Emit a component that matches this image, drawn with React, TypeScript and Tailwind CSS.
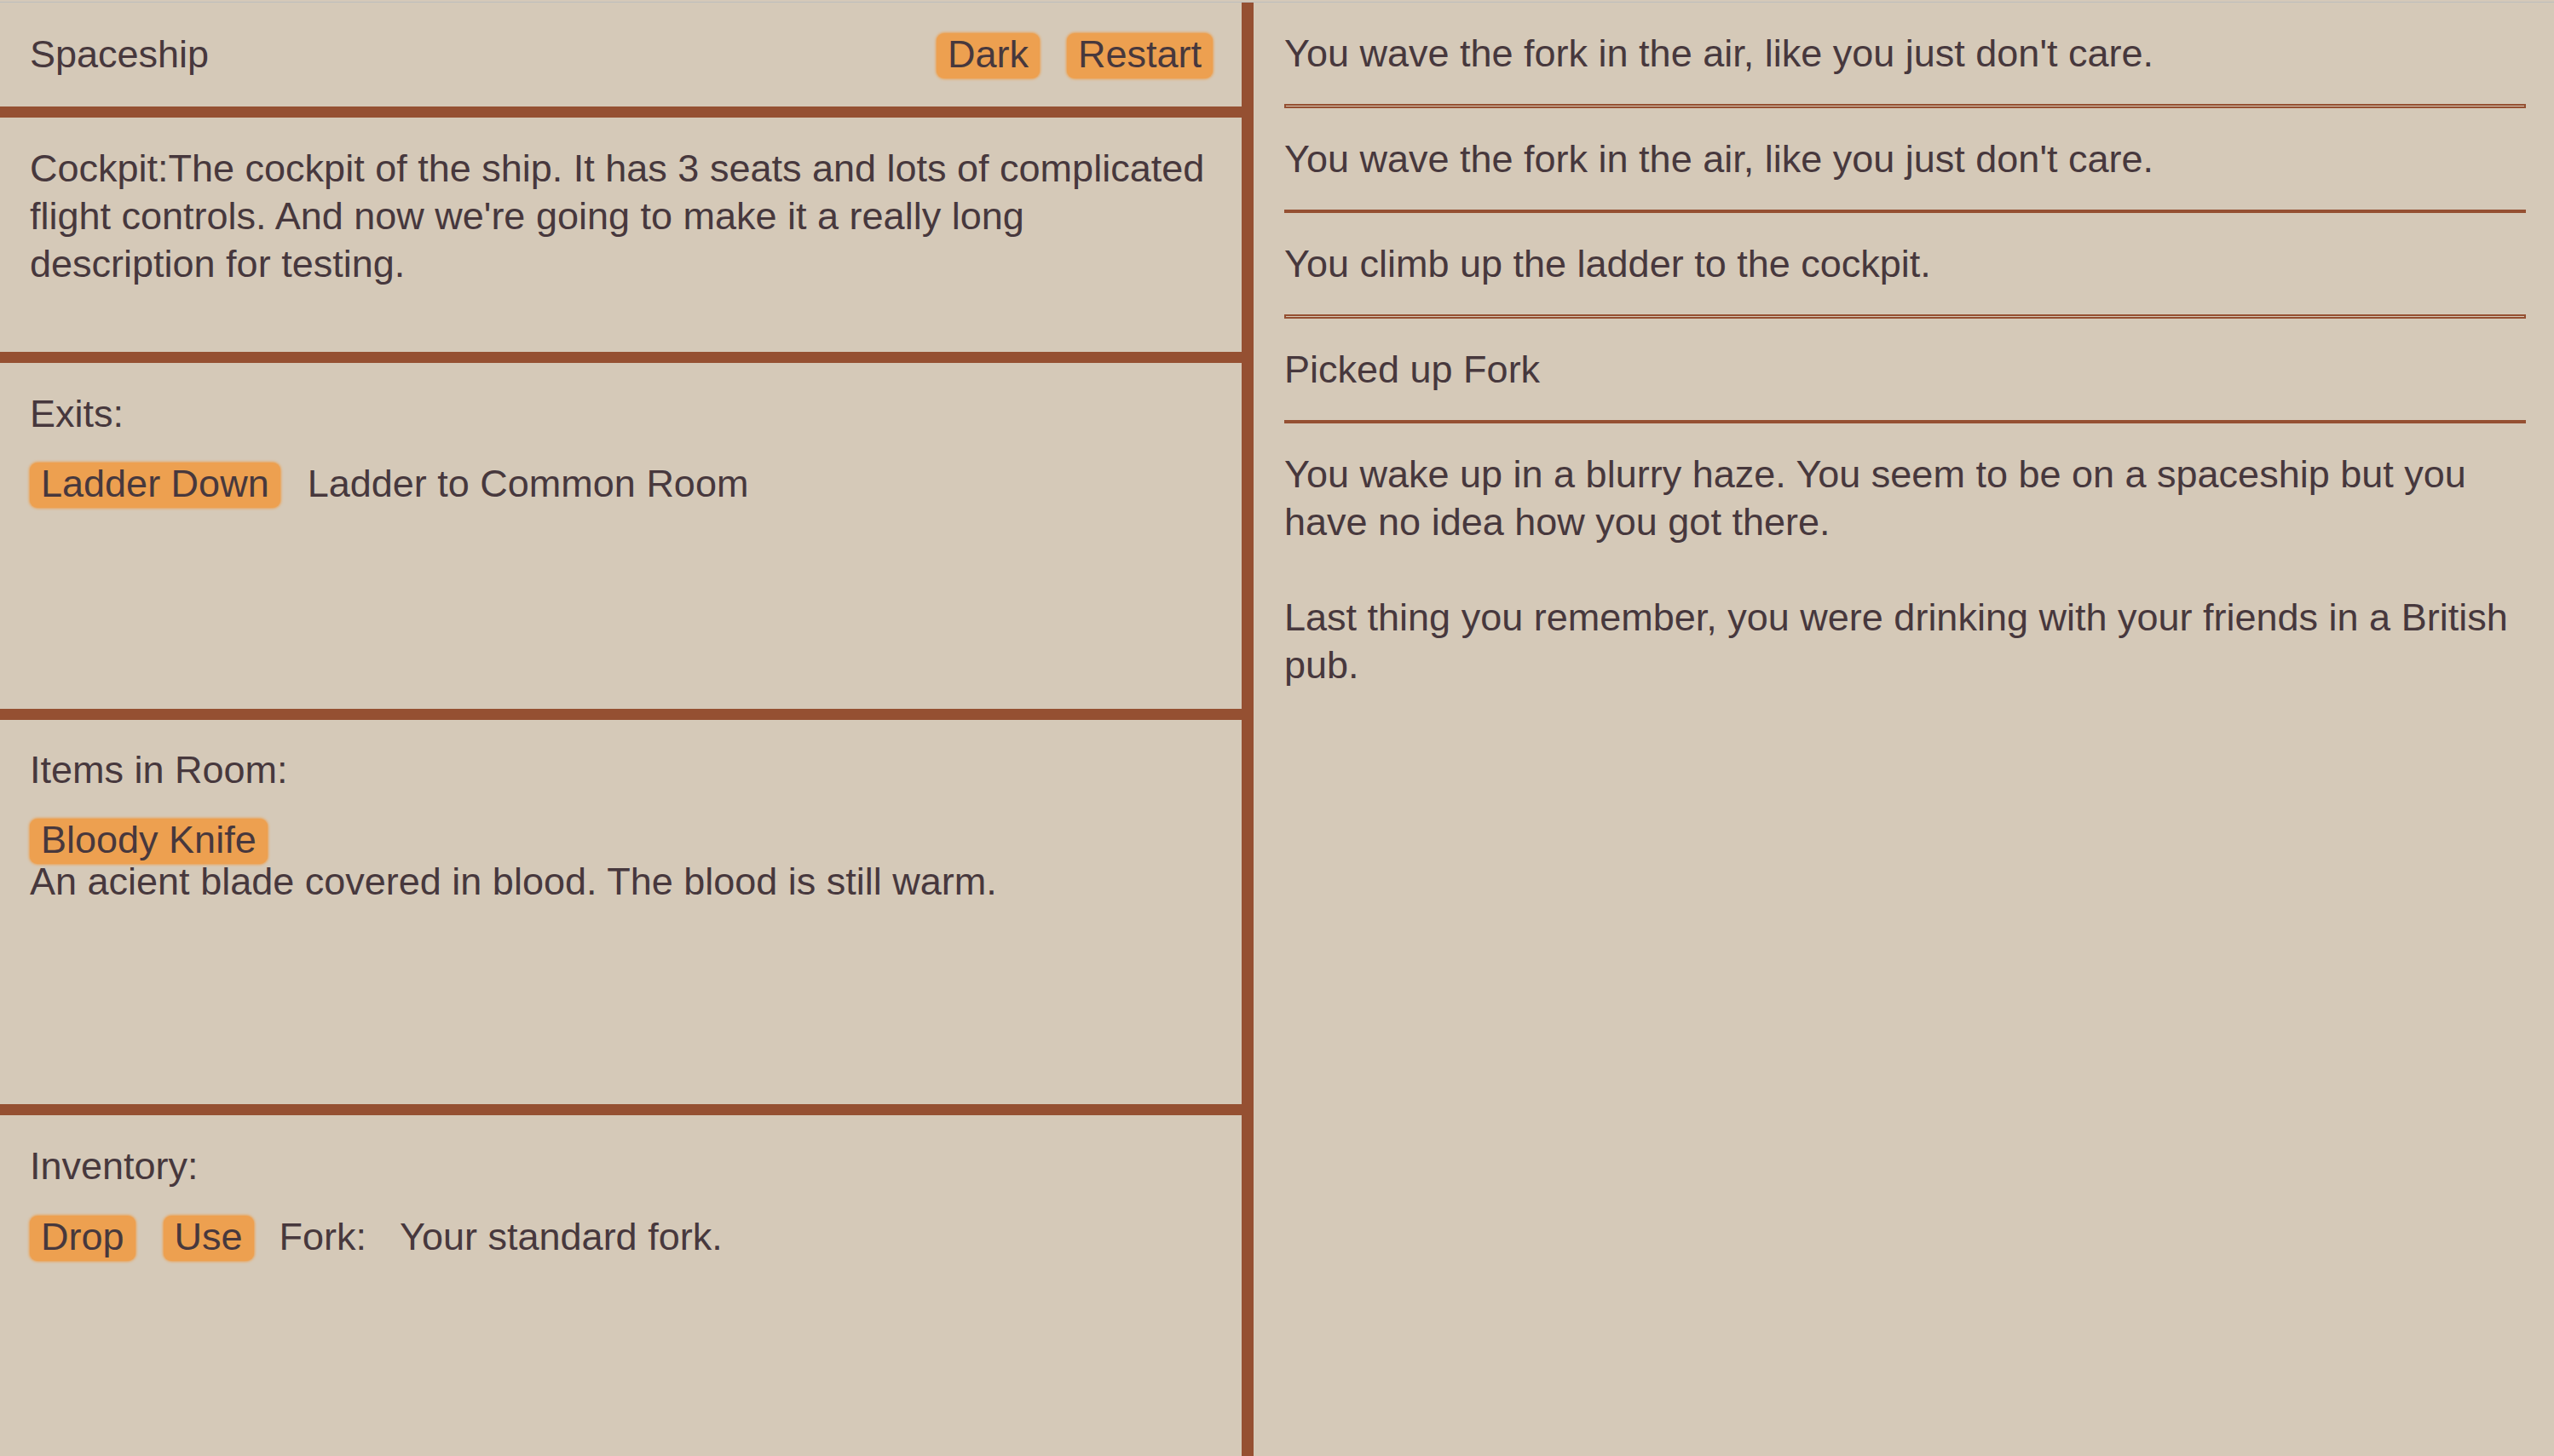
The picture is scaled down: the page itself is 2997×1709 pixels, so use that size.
import React from "react";

function Btn({ children }: { children: React.ReactNode }) {
  return (
    <span className="block h-[53px] px-[13px] leading-[50px] rounded-[9px] bg-[#eda050] shadow-[0_0_3px_1px_#eda050] whitespace-nowrap">
      {children}
    </span>
  );
}

function SepBox() {
  return <div className="h-[5px] border-2 border-[#955032]" />;
}

function SepSolid() {
  return <div className="h-[4px] bg-[#955032]" />;
}

function Msg({ children }: { children: React.ReactNode }) {
  return <div className="pt-[32px] pb-[31px] leading-[56px]">{children}</div>;
}

export default function App() {
  return (
    <div className="h-screen flex flex-col bg-[#d5c9b8] pt-[2px] text-[45px] text-[#47383d] font-['Liberation_Sans',Arial,sans-serif] overflow-hidden">
      <div className="flex-1 flex border-t border-[#bdbdbd] min-h-0">
        {/* Left column */}
        <div className="w-[1457px] shrink-0 flex flex-col">
          <div className="h-[122px] flex items-start justify-between pl-[35px] pr-[34px] pt-[33px]">
            <div className="leading-[56px]">Spaceship</div>
            <div className="flex gap-[32px] mt-[3px]">
              <Btn>Dark</Btn>
              <Btn>Restart</Btn>
            </div>
          </div>
          <div className="h-[13px] bg-[#955032]" />

          <div className="h-[275px] pl-[35px] pr-[35px] pt-[32px] leading-[56px]">
            Cockpit:The cockpit of the ship. It has 3 seats and lots of complicated flight controls. And now we're going to make it a really long description for testing.
          </div>
          <div className="h-[13px] bg-[#955032]" />

          <div className="h-[406px] pl-[35px] pr-[35px] pt-[32px]">
            <div className="leading-[56px]">Exits:</div>
            <div className="flex items-start mt-[29px]">
              <Btn>Ladder Down</Btn>
              <span className="ml-[32px] leading-[50px]">Ladder to Common Room</span>
            </div>
          </div>
          <div className="h-[13px] bg-[#955032]" />

          <div className="h-[451px] pl-[35px] pr-[35px] pt-[31px]">
            <div className="leading-[56px]">Items in Room:</div>
            <div className="flex items-start mt-[29px]">
              <Btn>Bloody Knife</Btn>
            </div>
            <div className="-mt-[7px] leading-[56px]">
              An acient blade covered in blood. The blood is still warm.
            </div>
          </div>
          <div className="h-[13px] bg-[#955032]" />

          <div className="flex-1 pl-[35px] pr-[35px] pt-[32px]">
            <div className="leading-[56px]">Inventory:</div>
            <div className="flex items-start mt-[30px]">
              <Btn>Drop</Btn>
              <div className="ml-[33px] flex">
                <Btn>Use</Btn>
              </div>
              <span className="ml-[30px] leading-[50px]">Fork:</span>
              <span className="ml-[39px] leading-[50px]">Your standard fork.</span>
            </div>
          </div>
        </div>

        {/* Divider */}
        <div className="w-[14px] shrink-0 bg-[#955032]" />

        {/* Right column */}
        <div className="flex-1 pl-[36px] pr-[33px]">
          <Msg>You wave the fork in the air, like you just don't care.</Msg>
          <SepBox />
          <Msg>You wave the fork in the air, like you just don't care.</Msg>
          <SepSolid />
          <Msg>You climb up the ladder to the cockpit.</Msg>
          <SepBox />
          <Msg>Picked up Fork</Msg>
          <SepSolid />
          <div className="pt-[32px] leading-[56px]">
            You wake up in a blurry haze. You seem to be on a spaceship but you have no idea how you got there.
            <br />
            <br />
            Last thing you remember, you were drinking with your friends in a British pub.
          </div>
        </div>
      </div>
    </div>
  );
}
